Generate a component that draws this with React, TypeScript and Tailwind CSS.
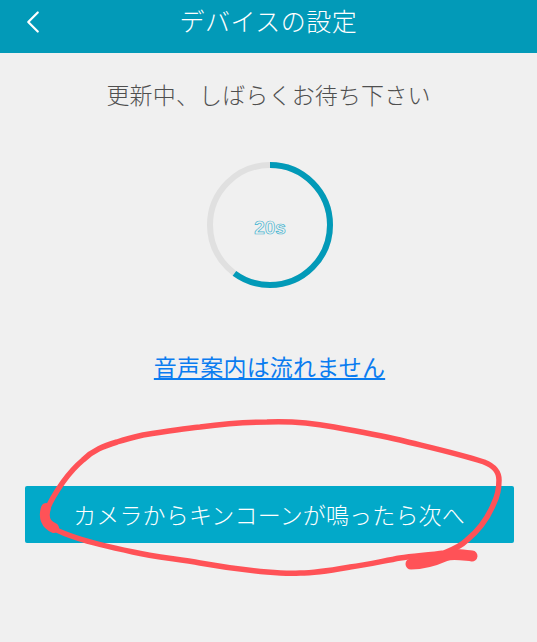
import { ChevronLeft } from "lucide-react";

const FONT = "font-['Noto_Sans_CJK_JP','Noto_Sans',sans-serif]";

// Progress ring, drawn clockwise from 12 o'clock
function Ring() {
  const r = 60;
  const c = 2 * Math.PI * r;
  return (
    <div className="relative w-[130px] h-[130px] flex items-center justify-center">
      <svg width="130" height="130" viewBox="0 0 130 130" className="absolute inset-0">
        <circle cx="65" cy="65" r={r} fill="none" stroke="#e0e0e0" strokeWidth="6" />
        <circle
          cx="65"
          cy="65"
          r={r}
          fill="none"
          stroke="#029ab8"
          strokeWidth="6"
          strokeDasharray={`${c * 0.6} ${c}`}
          transform="rotate(-90 65 65)"
        />
      </svg>
      <span className="mt-[7px] font-['Liberation_Sans',sans-serif] text-[19px] font-bold text-[#f0f0f0] [-webkit-text-stroke:0.7px_#45b5d0]">
        20s
      </span>
    </div>
  );
}

// Hand-drawn red circle on top of the screenshot
function Scribble() {
  return (
    <svg
      width="537"
      height="642"
      viewBox="0 0 537 642"
      fill="none"
      className="absolute inset-0 pointer-events-none"
    >
      <path
        d="M45 517 C47 505 56 492 63 482 C71 471 77 465 83 460 C93 450 104 446 117 442 C126 439 134 437 143 435 C162 432 181 429 200 427 C222 424 245 422 267 422 C290 421 312 423 334 427 C356 431 378 435 400 440 C428 447 456 453 484 462 C494 466 499 471 499 480 C499 488 498 495 494 503 C488 518 478 531 467 540 C460 547 452 550 444 553 C430 555 415 556 400 558 C383 561 367 565 350 567 C333 570 317 573 300 573 C289 574 278 573 267 572 C245 570 222 567 200 563 C178 559 155 557 133 552 C114 548 95 544 77 538 C68 535 60 532 55 529 C49 526 45 522 45 517 Z"
        stroke="#ff5257"
        strokeWidth="5.5"
        strokeLinejoin="round"
      />
      <path d="M46 508 C43 517 46 525 54 528" stroke="#ff5257" strokeWidth="10" strokeLinecap="round" />
      <path
        d="M411 564 C425 564 436 560 445 556 C452 553 462 555 472 556"
        stroke="#ff5257"
        strokeWidth="11"
        strokeLinecap="round"
      />
    </svg>
  );
}

export default function App() {
  return (
    <div className={`relative w-[537px] h-[642px] overflow-hidden bg-[#f0f0f0] ${FONT}`}>
      <header className="relative h-[53px] bg-[#029ab8] flex items-center justify-center text-white">
        <ChevronLeft size={38} strokeWidth={1.4} className="absolute left-[14px] top-[3px]" />
        <h1 className="text-[25px] tracking-[0.5px] font-light leading-none -mt-[12px]">デバイスの設定</h1>
      </header>

      <main className="flex flex-col items-center">
        <p className="mt-[24px] text-[23px] tracking-[0.15px] leading-[34px] font-light text-[#4f4f4f]">
          更新中、しばらくお待ち下さい
        </p>
        <div className="mt-[49px] ml-[3px]">
          <Ring />
        </div>
        <a className="mt-[59px] ml-[2px] text-[23px] tracking-[0.2px] leading-[34px] font-normal text-[#0a7cf0] underline underline-offset-2">
          音声案内は流れません
        </a>
        <button className="mt-[103px] ml-[1px] w-[489px] h-[57px] rounded-[2px] bg-[#02a9c9] text-white text-[23px] tracking-[0.15px] font-light">
          カメラからキンコーンが鳴ったら次へ
        </button>
      </main>

      <Scribble />
    </div>
  );
}
